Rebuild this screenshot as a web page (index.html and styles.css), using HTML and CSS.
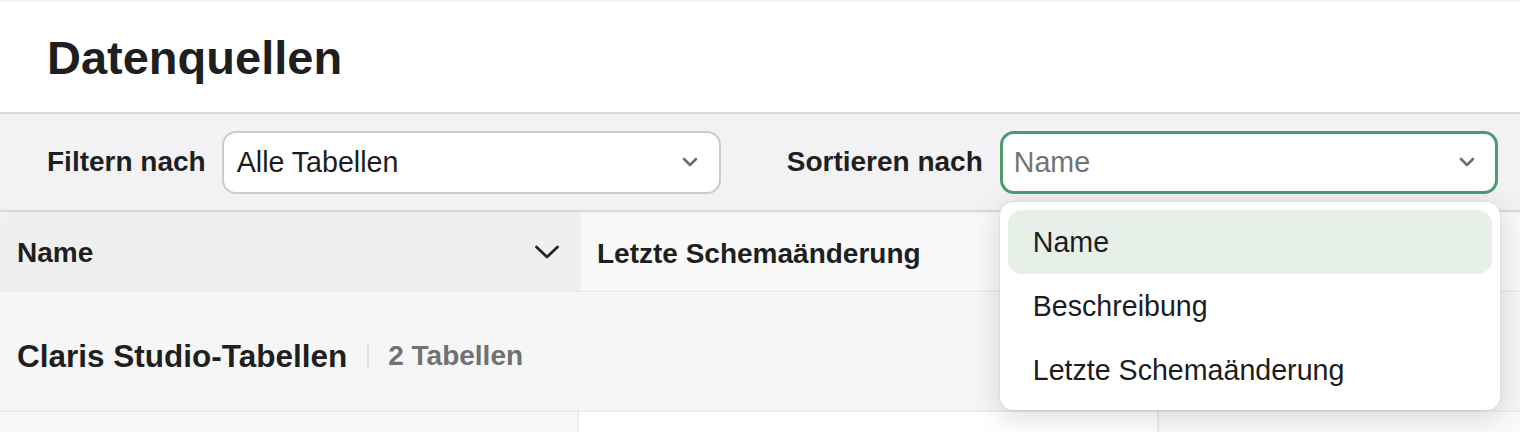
FILE: index.html
```html
<!DOCTYPE html>
<html lang="de">
<head>
<meta charset="utf-8">
<title>Datenquellen</title>
<link rel="stylesheet" href="styles.css">
</head>
<body>
<div class="page">
  <div class="top-strip"></div>
  <header class="page-header">
    <h1 class="page-title">Datenquellen</h1>
  </header>

  <div class="toolbar">
    <div class="field field-filter">
      <span class="field-label">Filtern nach</span>
      <div class="select">
        <span class="select-value">Alle Tabellen</span>
        <svg class="select-chevron" width="16" height="10" viewBox="0 0 16 10" aria-hidden="true"><path d="M2 2 L8 8 L14 2" fill="none" stroke="currentColor" stroke-width="2.6" stroke-linecap="round" stroke-linejoin="round"/></svg>
      </div>
    </div>

    <div class="field field-sort">
      <span class="field-label">Sortieren nach</span>
      <div class="select-wrap">
        <div class="select select-open">
          <span class="select-value placeholder">Name</span>
          <svg class="select-chevron" width="16" height="10" viewBox="0 0 16 10" aria-hidden="true"><path d="M2 2 L8 8 L14 2" fill="none" stroke="currentColor" stroke-width="2.6" stroke-linecap="round" stroke-linejoin="round"/></svg>
        </div>
        <ul class="menu" role="listbox">
          <li class="menu-item is-active" role="option">Name</li>
          <li class="menu-item" role="option">Beschreibung</li>
          <li class="menu-item" role="option">Letzte Schemaänderung</li>
        </ul>
      </div>
    </div>
  </div>

  <div class="table">
    <div class="thead">
      <div class="th th-name">
        <span>Name</span>
        <svg class="th-chevron" width="26" height="16" viewBox="0 0 26 16" aria-hidden="true"><path d="M2.5 3 L13 13 L23.5 3" fill="none" stroke="currentColor" stroke-width="2.8" stroke-linecap="round" stroke-linejoin="round"/></svg>
      </div>
      <div class="th th-date">Letzte Schemaänderung</div>
      <div class="th th-extra"></div>
    </div>

    <div class="group-row">
      <span class="group-title">Claris Studio-Tabellen</span>
      <span class="group-sep"></span>
      <span class="group-count">2 Tabellen</span>
    </div>

    <div class="row">
      <div class="td td-name"></div>
      <div class="td td-date"></div>
      <div class="td td-extra"></div>
    </div>
  </div>
</div>
</body>
</html>
```

FILE: styles.css
```css
* {
  box-sizing: border-box;
}

html, body {
  margin: 0;
  padding: 0;
  background: #ffffff;
}

body {
  font-family: "Liberation Sans", Arial, sans-serif;
  color: #1d1d1f;
  overflow: hidden;
}

.page {
  width: 1520px;
  height: 432px;
  overflow: hidden;
}

.top-strip {
  height: 2px;
  background: #f2f2f2;
}

/* Page header */
.page-header {
  height: 112px;
  padding: 3px 0 0 47px;
  display: flex;
  align-items: center;
  border-bottom: 2px solid #d8d8da;
}

.page-title {
  margin: 0;
  font-size: 47px;
  line-height: 1.15;
  font-weight: 700;
  color: #1f1f1f;
}

/* Filter / sort toolbar */
.toolbar {
  height: 98px;
  padding: 0 0 0 47px;
  background: #f2f2f4;
  border-bottom: 2px solid #d8d8da;
  display: flex;
  align-items: center;
  gap: 66px;
}

.field {
  display: flex;
  align-items: center;
  gap: 16px;
}

.field-sort {
  gap: 17px;
}

.field-label {
  font-size: 28px;
  font-weight: 700;
  color: #1f1f1f;
  white-space: nowrap;
}

.select-wrap {
  position: relative;
}

.select {
  width: 499px;
  height: 63px;
  background: #ffffff;
  border: 2px solid #cbcbcd;
  border-radius: 14px;
  display: flex;
  align-items: center;
  justify-content: space-between;
  padding: 0 21px 0 13px;
}

.select-value {
  font-size: 28.6px;
  color: #1d1d1f;
}

.select-value.placeholder {
  color: #737373;
}

.select-chevron {
  color: #6e6e6e;
  flex: none;
}

.select-open {
  width: 498px;
  border: 3px solid #4d9c6f;
  padding: 0 20px 0 11px;
}

/* Open dropdown menu */
.menu {
  position: absolute;
  top: calc(100% + 8px);
  left: 0;
  width: 500px;
  margin: 0;
  padding: 8px;
  list-style: none;
  background: #ffffff;
  border-radius: 14px;
  box-shadow: 0 6px 30px rgba(0, 0, 0, 0.16), 0 0 0 1px rgba(0, 0, 0, 0.03);
  z-index: 10;
}

.menu-item {
  height: 64px;
  display: flex;
  align-items: center;
  padding-left: 25px;
  padding-top: 1px;
  font-size: 28.6px;
  color: #1d1d1f;
  border-radius: 14px;
}

.menu-item.is-active {
  background: #e6f0e9;
}

/* Table */
.thead {
  height: 80px;
  display: flex;
  background: #f4f4f4;
  border-bottom: 1px solid #e9e9e9;
}

.th {
  font-size: 28px;
  font-weight: 700;
  color: #1f1f1f;
  display: flex;
  align-items: center;
  padding-top: 3px;
}

.th-name {
  width: 580px;
  flex: none;
  background: #efefef;
  border-top-left-radius: 10px;
  padding-left: 17px;
  padding-right: 20px;
  justify-content: space-between;
}

.th-chevron {
  color: #262626;
  margin-top: -2px;
}

.th-date {
  width: 579px;
  flex: none;
  margin: 2px 0 1px 1px;
  background: #f9f9f9;
  padding-left: 16px;
}

.th-extra {
  flex: 1;
  margin: 2px 0 1px 2px;
  background: #f9f9f9;
}

.group-row {
  height: 120px;
  padding: 10px 0 0 17px;
  background: #f6f6f6;
  border-bottom: 2px solid #ececec;
  display: flex;
  align-items: center;
}

.group-title {
  font-size: 31.5px;
  font-weight: 700;
  color: #1f1f1f;
}

.group-sep {
  width: 2px;
  height: 26px;
  margin: 0 19px 0 20px;
  background: #e0e0e0;
}

.group-count {
  font-size: 28px;
  font-weight: 700;
  color: #717171;
}

.row {
  height: 80px;
  display: flex;
}

.td {
  height: 100%;
}

.td-name {
  width: 579px;
  flex: none;
  background: #f7f7f7;
  border-right: 2px solid #ececec;
}

.td-date {
  width: 580px;
  flex: none;
  background: #ffffff;
  border-right: 2px solid #ececec;
}

.td-extra {
  flex: 1;
  background: #fafafa;
}
```
